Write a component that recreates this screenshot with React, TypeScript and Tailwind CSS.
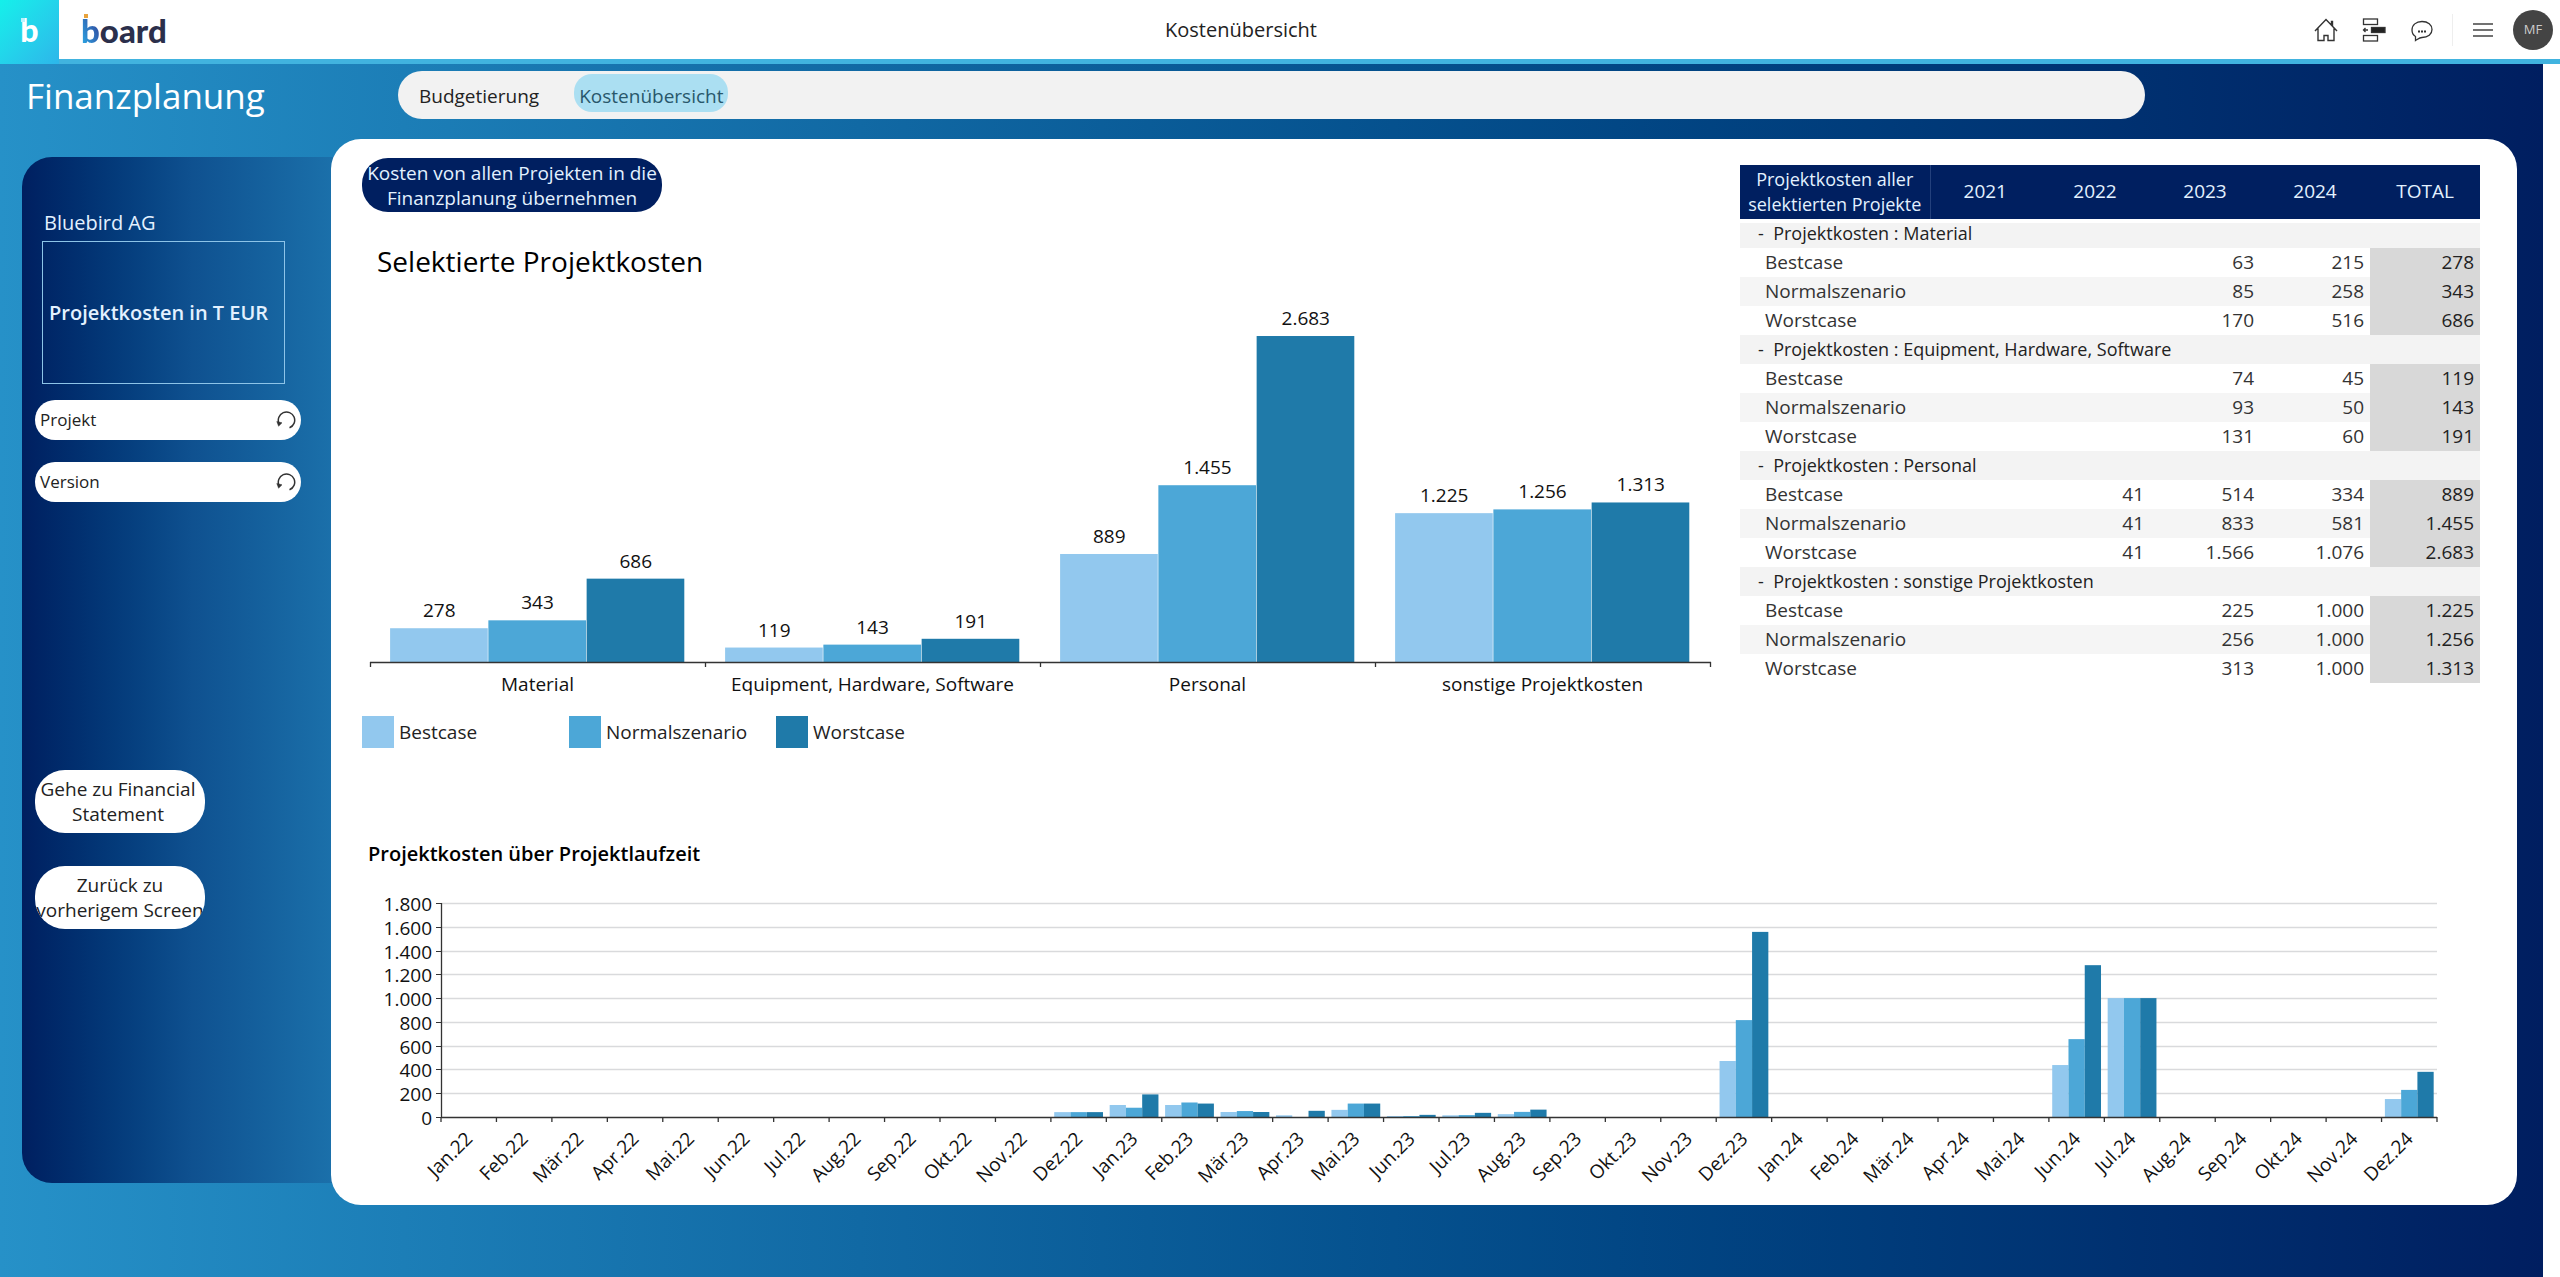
import React from 'react';

const SERIES = [
  { name: 'Bestcase', color: '#92c8ee', swatch: 'bg-[#92c8ee]' },
  { name: 'Normalszenario', color: '#4ca7d7', swatch: 'bg-[#4ca7d7]' },
  { name: 'Worstcase', color: '#1f7aa9', swatch: 'bg-[#1f7aa9]' },
];

// each row: 2021, 2022, 2023, 2024, TOTAL
const costGroups = [
  {
    name: 'Material',
    rows: [
      [null, null, 63, 215, 278],
      [null, null, 85, 258, 343],
      [null, null, 170, 516, 686],
    ],
  },
  {
    name: 'Equipment, Hardware, Software',
    rows: [
      [null, null, 74, 45, 119],
      [null, null, 93, 50, 143],
      [null, null, 131, 60, 191],
    ],
  },
  {
    name: 'Personal',
    rows: [
      [null, 41, 514, 334, 889],
      [null, 41, 833, 581, 1455],
      [null, 41, 1566, 1076, 2683],
    ],
  },
  {
    name: 'sonstige Projektkosten',
    rows: [
      [null, null, 225, 1000, 1225],
      [null, null, 256, 1000, 1256],
      [null, null, 313, 1000, 1313],
    ],
  },
];

const columns = ['2021', '2022', '2023', '2024', 'TOTAL'];

const months = ['Jan', 'Feb', 'Mär', 'Apr', 'Mai', 'Jun', 'Jul', 'Aug', 'Sep', 'Okt', 'Nov', 'Dez'];
const periods = ['22', '23', '24'].flatMap((year) => months.map((month) => `${month}.${year}`));

const monthlyCosts: Record<string, number[]> = {
  'Dez.22': [41, 41, 41],
  'Jan.23': [101, 78, 190],
  'Feb.23': [101, 122, 113],
  'Mär.23': [42, 50, 42],
  'Apr.23': [14, 0, 52],
  'Mai.23': [60, 113, 113],
  'Jun.23': [8, 8, 18],
  'Jul.23': [14, 16, 35],
  'Aug.23': [24, 43, 62],
  'Dez.23': [471, 815, 1557],
  'Jun.24': [437, 655, 1277],
  'Jul.24': [1000, 1000, 1000],
  'Dez.24': [151, 228, 380],
};

const formatNumber = (value: number) => String(value).replace(/\B(?=(\d{3})+$)/g, '.');

const ResetIcon = () => (
  <svg className="h-5 w-5" viewBox="0 0 20 20" fill="none" stroke="#333" strokeWidth="1.5">
    <path d="M13.5 17.8A8.2 8.2 0 1 0 3 13.5" />
    <path d="M.8 11.5 2.6 16.2 6 12.8Z" fill="#333" strokeWidth=".5" />
  </svg>
);

const Header = () => (
  <header className="flex h-16 items-stretch bg-white">
    <a href="#home" aria-label="Board" className="relative flex w-[59px] items-center justify-center bg-linear-to-br from-[#14f0ea] to-[#2db6ea] pb-1 font-['Lato',sans-serif] text-[32px] leading-8 font-black text-white">
      b
      <span className="absolute top-[18px] left-[21px] h-1 w-1 bg-[#b9f3ff]" />
    </a>
    <div className="flex flex-1 items-center border-b-5 border-[#41b3df]">
      <div className="flex flex-1 pl-[22px]">
        <span className="relative font-['Lato',sans-serif] text-[33px] leading-8 font-black text-[#2b2f4b]">
          <span className="bg-linear-to-tr from-[#25b4ee] to-[#2b2f8b] bg-clip-text text-transparent">b</span>oard
          <span className="absolute top-0 left-[3px] h-1 w-1 bg-[#e8a33d]" />
        </span>
      </div>
      <h1 className="mr-[152px] text-[20px] text-[#222]">Kostenübersicht</h1>
      <div className="flex flex-1 items-center justify-end pr-[7px]">
        <button type="button" aria-label="Startseite" className="mr-6">
          <svg className="h-6 w-6" viewBox="0 0 24 24" fill="none" stroke="#333" strokeWidth="1.4">
            <path d="M1 13 12 1.5 23 13M4 10.5V22.5H10V17.5H14V22.5H20V10.5M17.5 7V3.5H18.5V8" />
          </svg>
        </button>
        <button type="button" aria-label="Prozess" className="mr-6">
          <svg className="h-6 w-6" viewBox="0 0 24 24" fill="none" stroke="#333" strokeWidth="1.3">
            <rect x="1.5" y="1" width="14" height="5.5" />
            <rect x="1.5" y="17.5" width="14" height="5.5" />
            <rect x="9.5" y="9.5" width="13.5" height="5" fill="#222" />
            <path d="M6 12H1.5M3.5 10 1.5 12 3.5 14" />
          </svg>
        </button>
        <button type="button" aria-label="Kommentare">
          <svg className="h-6 w-6" viewBox="0 0 24 24" fill="none" stroke="#333" strokeWidth="1.3">
            <path d="M5.5 22.5V18.5C3 17 2 14.5 2 12 2 7 6 3.5 12 3.5S22 7 22 11.5 18 19.5 12 19.5C9.5 19.5 8 21 5.5 22.5Z" />
            <path d="M8 13.5H10M11 13.5H13M14 13.5H16" strokeWidth="1.8" />
          </svg>
        </button>
        <span className="mr-4 ml-[18px] h-8 w-px bg-[#eee]" />
        <button type="button" aria-label="Menü" className="mr-5 ml-1">
          <svg className="h-5 w-5" viewBox="0 0 20 20" stroke="#444" strokeWidth="1.5">
            <path d="M0 4H20M0 10H20M0 16H20" />
          </svg>
        </button>
        <span className="flex h-10 w-10 items-center justify-center rounded-full bg-[#444] text-[13px] text-[#ccc]">MF</span>
      </div>
    </div>
  </header>
);

const Sidebar = () => (
  <aside className="-mr-8 mt-[18px] mb-[22px] w-[341px] shrink-0 rounded-l-[30px] bg-linear-to-r from-[#001f60] via-[#0f5190] via-50% to-[#1e77b0] pl-[13px]">
    <p className="mt-[52px] pl-[9px] text-[20px] leading-7 text-[#e3f1ff]">Bluebird AG</p>
    <div className="mt-1 ml-[7px] flex h-[143px] w-[243px] items-center border border-[#8dc4e8] pl-1.5 text-[20px] font-semibold text-[#e3f1ff]">
      Projektkosten in T EUR
    </div>
    <div className="mt-4 flex flex-col gap-[22px]">
      {['Projekt', 'Version'].map((label) => (
        <button
          key={label}
          type="button"
          className="flex h-10 w-[266px] items-center justify-between rounded-full bg-white px-[5px] text-[17px] text-[#222]"
        >
          {label}
          <ResetIcon />
        </button>
      ))}
    </div>
    <div className="mt-[268px] flex flex-col gap-[33px] text-[19px] leading-[25px] text-[#222]">
      <button type="button" className="h-[63px] w-[170px] overflow-hidden rounded-[30px] bg-white pt-px pr-1 whitespace-nowrap">
        Gehe zu Financial
        <br />
        Statement
      </button>
      <button type="button" className="h-[63px] w-[170px] overflow-hidden rounded-[30px] bg-white pt-px whitespace-nowrap">
        Zurück zu
        <br />
        vorherigem Screen
      </button>
    </div>
  </aside>
);

const GroupedChart = () => {
  const left = 8;
  const base = 385;
  const slot = 335;
  const barWidth = (slot * 0.88) / 3;

  return (
    <svg className="w-full" viewBox="0 0 1350 423" role="img" aria-label="Selektierte Projektkosten">
      {costGroups.map((group, g) => (
        <g key={group.name}>
          {group.rows.map((row, s) => {
            const total = row[4] as number;
            const height = total * 0.1215;
            const x = left + g * slot + slot * 0.06 + s * barWidth;
            return (
              <g key={SERIES[s].name}>
                <rect x={x} y={base - height} width={barWidth - 0.6} height={height} fill={SERIES[s].color} />
                <text x={x + barWidth / 2} y={base - height - 11} textAnchor="middle" fontSize="19" fill="#111">
                  {formatNumber(total)}
                </text>
              </g>
            );
          })}
          <text x={left + (g + 0.5) * slot} y={base + 29} textAnchor="middle" fontSize="19" fill="#111">
            {group.name}
          </text>
        </g>
      ))}
      <path
        d={`M${left} ${base + 0.5}H${left + 4 * slot + 1}` + [0, 1, 2, 3, 4].map((i) => `M${left + i * slot + 0.5} ${base}v5`).join('')}
        stroke="#333"
        strokeWidth="1.3"
      />
    </svg>
  );
};

const TimelineChart = () => {
  const left = 79;
  const right = 2075;
  const base = 248;
  const slot = (right - left) / periods.length;
  const barWidth = (slot * 0.88) / 3;
  const scale = 214 / 1800;
  const steps = Array.from({ length: 10 }, (_, i) => i * 200);

  return (
    <svg className="w-full" viewBox="0 0 2118 336" role="img" aria-label="Projektkosten über Projektlaufzeit">
      {steps.map((value) => {
        const y = Math.round(base - value * scale) + 0.5;
        return (
          <g key={value}>
            {value > 0 && <line x1={left} x2={right} y1={y} y2={y} stroke="#d9dadc" strokeWidth="1.5" />}
            <line x1={left - 5} x2={left} y1={y} y2={y} stroke="#333" />
            <text x={left - 9} y={y + 7} textAnchor="end" fontSize="19" fill="#111">
              {formatNumber(value)}
            </text>
          </g>
        );
      })}
      {periods.map((period, p) => {
        const x = left + p * slot;
        return (
          <g key={period}>
            {(monthlyCosts[period] || []).map((value, s) => (
              <rect
                key={SERIES[s].name}
                x={x + slot * 0.06 + s * barWidth}
                y={base - value * scale}
                width={barWidth}
                height={value * scale}
                fill={SERIES[s].color}
              />
            ))}
            <text
              transform={`translate(${x + slot / 2 + 5} ${base + 23}) rotate(-45)`}
              textAnchor="end"
              fontSize="19"
              fill="#111"
            >
              {period}
            </text>
          </g>
        );
      })}
      <path
        d={`M${left + 0.5} 34V${base + 0.5}H${right}` + Array.from({ length: periods.length + 1 }, (_, i) => `M${left + i * slot} ${base}v5`).join('')}
        fill="none"
        stroke="#333"
        strokeWidth="1.3"
      />
    </svg>
  );
};

const CostTable = () => (
  <table className="mt-[7px] w-[740px] shrink-0 table-fixed border-collapse self-start text-[19px] leading-[25px]">
    <colgroup>
      <col className="w-[190px]" />
      <col />
      <col />
      <col />
      <col />
      <col />
    </colgroup>
    <thead>
      <tr className="h-[54px] bg-[#001f60] text-[#e3f1ff]">
        <th scope="col" className="border-r border-[#23407c] p-0 text-[18px] font-normal whitespace-nowrap">
          Projektkosten aller
          <br />
          selektierten Projekte
        </th>
        {columns.map((column) => (
          <th key={column} scope="col" className="p-0 pb-0.5 font-normal">
            {column}
          </th>
        ))}
      </tr>
    </thead>
    <tbody>
      {costGroups.map((group, g) => (
        <React.Fragment key={group.name}>
          <tr className="h-[29px] bg-[#f3f3f3]">
            <th
              scope="rowgroup"
              colSpan={6}
              className={`pl-[18px] text-left text-[18px] font-normal whitespace-pre text-[#222] ${g === 0 ? 'shadow-[inset_0_4px_0_#fff]' : ''}`}
            >
              {'-  '}Projektkosten : {group.name}
            </th>
          </tr>
          {group.rows.map((row, s) => (
            <tr key={SERIES[s].name} className={`h-[29px] text-[#333] ${s === 1 ? 'bg-[#f5f5f5]' : ''}`}>
              <th scope="row" className="pl-[25px] text-left font-normal">
                {SERIES[s].name}
              </th>
              {row.map((value, c) => (
                <td key={columns[c]} className={`pr-1.5 text-right ${c === 4 ? 'bg-[#d8d8d8] text-[#222]' : ''}`}>
                  {value === null ? '' : formatNumber(value)}
                </td>
              ))}
            </tr>
          ))}
        </React.Fragment>
      ))}
    </tbody>
  </table>
);

const App = () => {
  return (
    <div className="flex min-h-screen flex-col bg-white font-['Open_Sans',sans-serif]">
      <Header />
      <main className="mr-[17px] flex-1 bg-linear-to-r from-[#2691c8] to-[#001e60]">
        {/* Title and navigation */}
        <div className="flex h-[75px] items-start pt-[7px]">
          <h2 className="w-[398px] shrink-0 pl-[26px] text-[35px] leading-[50px] text-white">Finanzplanung</h2>
          <nav className="mr-[398px] flex h-12 flex-1 items-start rounded-full bg-[#f2f2f2] pt-[3px] pl-[21px] text-[19px]">
            <a href="#budgetierung" className="mr-[35px] leading-[45px] text-[#222]">Budgetierung</a>
            <a href="#kostenuebersicht" aria-current="page" className="h-[38px] rounded-[18px] bg-[#abdff2] px-[5px] leading-[45px] text-[#28576b]">
              Kostenübersicht
            </a>
          </nav>
        </div>

        <div className="flex pr-[26px] pl-[22px]">
          <Sidebar />
          <section className="relative min-w-0 flex-1 rounded-[30px] bg-white pt-[19px] pr-[37px] pl-[31px]">
            <div className="flex gap-7">
              <div className="min-w-0 flex-1">
                <button type="button" className="block h-[54px] w-[300px] overflow-hidden rounded-[26px] bg-[#001f60] pt-0.5 text-[19px] leading-[25px] whitespace-nowrap text-[#e3f1ff]">
                  Kosten von allen Projekten in die
                  <br />
                  Finanzplanung übernehmen
                </button>
                <h3 className="mt-[33px] pl-[15px] text-[28px] leading-8 font-medium text-black">Selektierte Projektkosten</h3>
                <GroupedChart />
                {/* Legend */}
                <ul className="mt-4 flex text-[19px] leading-8 text-[#222]">
                  {SERIES.map((series) => (
                    <li key={series.name} className="flex w-[207px] gap-[5px]">
                      <span className={`h-8 w-8 ${series.swatch}`} />
                      {series.name}
                    </li>
                  ))}
                </ul>
              </div>
              <CostTable />
            </div>
            <h3 className="mt-[91px] pl-1.5 text-[20px] leading-[30px] font-semibold text-black">Projektkosten über Projektlaufzeit</h3>
            <TimelineChart />
          </section>
        </div>
      </main>
    </div>
  );
};

export default App;
